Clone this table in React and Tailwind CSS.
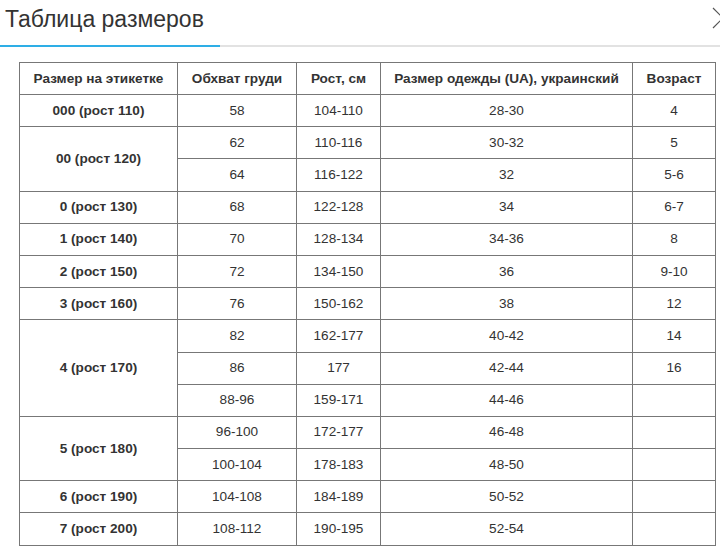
import React from "react";

const rows = [
  [{ t: "000 (рост 110)", span: 1 }, "58", "104-110", "28-30", "4"],
  [{ t: "00 (рост 120)", span: 2 }, "62", "110-116", "30-32", "5"],
  [null, "64", "116-122", "32", "5-6"],
  [{ t: "0 (рост 130)", span: 1 }, "68", "122-128", "34", "6-7"],
  [{ t: "1 (рост 140)", span: 1 }, "70", "128-134", "34-36", "8"],
  [{ t: "2 (рост 150)", span: 1 }, "72", "134-150", "36", "9-10"],
  [{ t: "3 (рост 160)", span: 1 }, "76", "150-162", "38", "12"],
  [{ t: "4 (рост 170)", span: 3 }, "82", "162-177", "40-42", "14"],
  [null, "86", "177", "42-44", "16"],
  [null, "88-96", "159-171", "44-46", ""],
  [{ t: "5 (рост 180)", span: 2 }, "96-100", "172-177", "46-48", ""],
  [null, "100-104", "178-183", "48-50", ""],
  [{ t: "6 (рост 190)", span: 1 }, "104-108", "184-189", "50-52", ""],
  [{ t: "7 (рост 200)", span: 1 }, "108-112", "190-195", "52-54", ""],
];

const headers = [
  ["Размер на этикетке", "w-[158px]"],
  ["Обхват груди", "w-[119px]"],
  ["Рост, см", "w-[84px]"],
  ["Размер одежды (UA), украинский", "w-[252px]"],
  ["Возраст", "w-[83px]"],
];

const cell = "border border-[#777] text-center align-middle";

export default function App() {
  return (
    <div className="w-[720px] h-[549px] overflow-hidden bg-white text-[#333] font-['Liberation_Sans',Arial,sans-serif]">
      <div className="relative h-[47px]">
        <h2 className="pl-[5px] pt-[4px] text-[23px] leading-[30px] font-normal text-[#333]">
          Таблица размеров
        </h2>
        <button className="absolute right-[-10px] top-[6px] w-[20px] h-[24px] text-[#555]">
          <svg width="20" height="24" viewBox="0 0 20 24" fill="none" stroke="currentColor" strokeWidth="1.2">
            <path d="M3 2 L13 12 L3 22" />
          </svg>
        </button>
        <div className="absolute left-0 right-0 top-[45px] h-[2px] bg-[#e2e2e2]">
          <div className="w-[220px] h-[2px] bg-[#2eaee6]" />
        </div>
      </div>
      <div className="pl-[19px] pt-[15px]">
        <table className="border-collapse border border-[#777] table-fixed w-[696px] text-[13.6px] leading-[16px]">
          <thead>
            <tr className="h-[32px]">
              {headers.map(([h, w]) => (
                <th key={h} className={`${cell} ${w} font-bold`}>
                  {h}
                </th>
              ))}
            </tr>
          </thead>
          <tbody>
            {rows.map((r, i) => (
              <tr key={i} className="h-[32.2px]">
                {r[0] && (
                  <td rowSpan={r[0].span} className={`${cell} font-bold`}>
                    {r[0].t}
                  </td>
                )}
                {r.slice(1).map((v, j) => (
                  <td key={j} className={cell}>
                    {v}
                  </td>
                ))}
              </tr>
            ))}
          </tbody>
        </table>
      </div>
    </div>
  );
}
